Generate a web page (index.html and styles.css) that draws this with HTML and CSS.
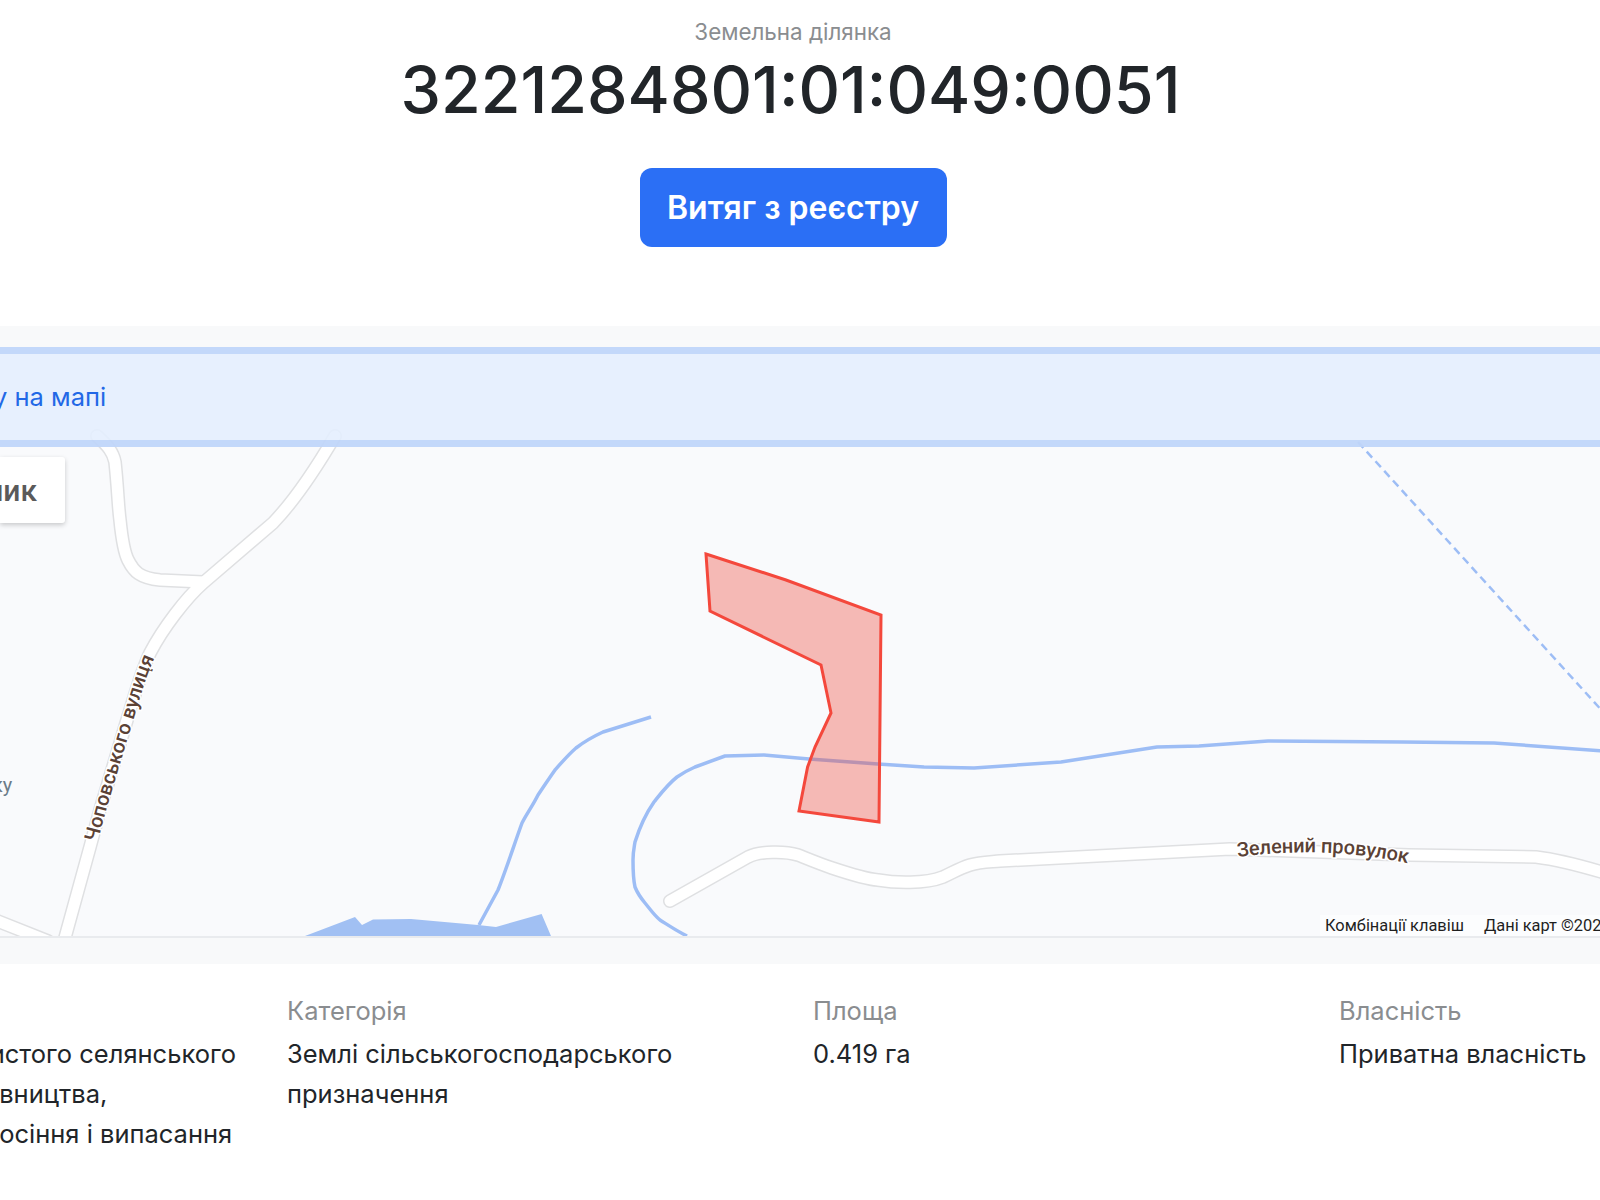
FILE: index.html
```html
<!DOCTYPE html>
<html lang="uk">
<head>
<meta charset="utf-8">
<title>Земельна ділянка</title>
<link rel="stylesheet" href="styles.css">
</head>
<body>
<main class="page">
  <header class="hero">
    <p class="hero-label">Земельна ділянка</p>
    <h1 class="hero-number">3221284801:01:049:0051</h1>
    <a class="btn" href="#">Витяг з реєстру</a>
  </header>

  <section class="map-section">
    <div class="map">
      <svg class="map-svg" viewBox="0 347 1600 589" width="1600" height="589">
        <defs>
          <path id="road-chop" d="M63,945 L90,847 L100,810 L127,720 C135,695 140,675 150,653 C163,628 186,598 203,583"/>
          <path id="road-zel" d="M1237,851 C1290,844 1350,844 1412,858"/>
        </defs>
        <g class="road-casing">
          <path d="M97,436 C108,446 113,452 115,462 C118,490 118,505 120,520 C122,540 124,552 128,560 C134,572 140,578 160,580 L203,582"/>
          <path d="M335,436 C318,465 295,500 273,523 L203,583 C186,598 163,628 150,653 C140,675 135,695 127,720 L100,810 L90,847 L63,945"/>
          <path d="M-5,920 L48,941"/>
          <path d="M670,901 L748,857 C760,851 785,851 798,855 C808,859 820,864 832,868 C850,874 865,879 878,880 C895,883 925,884 943,877 C952,873 960,868 970,865 C980,862 990,862 1000,861 L1230,849 L1409,855 L1536,857 C1560,860 1585,867 1605,873"/>
        </g>
        <g class="road-fill">
          <path d="M97,436 C108,446 113,452 115,462 C118,490 118,505 120,520 C122,540 124,552 128,560 C134,572 140,578 160,580 L203,582"/>
          <path d="M335,436 C318,465 295,500 273,523 L203,583 C186,598 163,628 150,653 C140,675 135,695 127,720 L100,810 L90,847 L63,945"/>
          <path d="M-5,920 L48,941"/>
          <path d="M670,901 L748,857 C760,851 785,851 798,855 C808,859 820,864 832,868 C850,874 865,879 878,880 C895,883 925,884 943,877 C952,873 960,868 970,865 C980,862 990,862 1000,861 L1230,849 L1409,855 L1536,857 C1560,860 1585,867 1605,873"/>
        </g>
        <polygon class="lake" points="305,936 355,917 362,925 373,919.5 411,919 478,925 496,927 541.6,914 551,936"/>
        <g class="river">
          <path d="M651,717 L603,732 C590,738 585,741 576,748 C568,755 562,762 555,770 C548,780 544,786 538,795 C532,807 527,813 522,823 C514,845 506,870 498,890 L479,925"/>
          <path d="M687,936 C675,930 668,925 660,920 C654,915 650,909 645,903 C640,897 637,892 635,887 C633,878 633,870 633,860 C633,852 634,848 635,842 C640,826 647,812 654,802 C662,792 668,784 677,777 C683,773 688,770 695,767 L725,756 L764,755 L809,759 L878,764 L924,767 L974,768 L1061,762 L1157,747 L1199,746 L1268,741 L1402,742 L1494,743 L1605,751"/>
        </g>
        <path class="border-dash" d="M1358,442 L1605,714"/>
        <polygon class="parcel" points="706,554 786,580 881,615 879,822 799,811 807.6,767 815,747 831,713 821,665 710,611"/>
        <text class="road-label" dy="6"><textPath href="#road-chop" startOffset="108">Чоповського вулиця</textPath></text>
        <text class="road-label" dy="6"><textPath href="#road-zel" startOffset="0">Зелений провулок</textPath></text>
        <text class="poi-label" x="-8" y="792">ку</text>
      </svg>
      <div class="type-card"><span class="type-card-text">ник</span></div>
      <div class="attribution"><span>Комбінації клавіш</span><span>Дані карт ©2024</span></div>
      <div class="map-banner"><a class="map-banner-link" href="#">у на мапі</a></div>
    </div>
  </section>

  <section class="facts">
    <div class="fact fact-first">
      <div class="fact-label">Призначення</div>
      <div class="fact-value">Для ведення особистого селянського<br>господарства, садівництва,<br>городництва, сінокосіння і випасання</div>
    </div>
    <div class="fact">
      <div class="fact-label">Категорія</div>
      <div class="fact-value">Землі сільськогосподарського призначення</div>
    </div>
    <div class="fact">
      <div class="fact-label">Площа</div>
      <div class="fact-value">0.419 га</div>
    </div>
    <div class="fact">
      <div class="fact-label">Власність</div>
      <div class="fact-value">Приватна власність</div>
    </div>
  </section>
</main>
</body>
</html>
```
FILE: styles.css
```css
* { box-sizing: border-box; }
html, body { margin: 0; padding: 0; background: #fff; }
body {
  width: 1600px;
  height: 1200px;
  overflow: hidden;
  font-family: Inter, "Noto Sans", sans-serif;
  color: #212529;
}
.page { display: flex; flex-direction: column; }

.hero {
  display: flex;
  flex-direction: column;
  align-items: center;
  width: 1586px;
  padding-top: 18px;
  height: 326px;
}
.hero-label {
  margin: 0;
  font-size: 22.4px;
  line-height: 28px;
  color: #8a8d90;
}
.hero-number {
  margin: 5px 5px 0 0;
  font-size: 64.5px;
  line-height: 78px;
  font-weight: 500;
  color: #212529;
}
.btn {
  margin-top: 39px;
  width: 307px;
  height: 79px;
  display: flex;
  align-items: center;
  justify-content: center;
  border-radius: 12px;
  background: #2b6ff5;
  color: #fff;
  font-size: 32px;
  font-weight: 600;
  text-decoration: none;
}

.map-section {
  height: 638px;
  padding: 21px 0 26px;
  background: #f8f9fa;
}
.map {
  position: relative;
  height: 591px;
  background: #f9fafc;
  border-bottom: 2px solid #e9ebee;
  overflow: hidden;
}
.map-svg { display: block; }
.road-casing path { fill: none; stroke: #dfe0e2; stroke-width: 14; stroke-linecap: round; stroke-linejoin: round; }
.road-fill path { fill: none; stroke: #fff; stroke-width: 11; stroke-linecap: round; stroke-linejoin: round; }
.lake { fill: #a1c0f3; }
.river path { fill: none; stroke: #9dbdf5; stroke-width: 3.5; stroke-linejoin: round; }
.border-dash { fill: none; stroke: #9dbdf5; stroke-width: 2.5; stroke-dasharray: 8 5; }
.parcel { fill: rgba(239, 68, 56, 0.36); stroke: #f4483c; stroke-width: 3; stroke-linejoin: miter; }
.road-label {
  font-family: Roboto, sans-serif;
  font-size: 20px;
  font-weight: 500;
  fill: #5b4236;
  stroke: #fff;
  stroke-width: 3px;
  paint-order: stroke;
}
.poi-label { font-family: Roboto, sans-serif; font-size: 20px; fill: #6c7c88; }

.type-card {
  position: absolute;
  left: 0;
  top: 110px;
  width: 65px;
  height: 66px;
  display: flex;
  align-items: center;
  justify-content: flex-end;
  padding-right: 28px;
  background: #fff;
  border-radius: 0 3px 3px 0;
  box-shadow: 0 2px 5px rgba(0, 0, 0, 0.2);
}
.type-card-text {
  flex: none;
  font-family: Roboto, sans-serif;
  font-size: 30px;
  font-weight: 500;
  color: #5a5a5a;
}
.attribution {
  position: absolute;
  left: 1320px;
  bottom: 0;
  width: 300px;
  height: 21px;
  display: flex;
  align-items: center;
  gap: 20px;
  padding-left: 5px;
  white-space: nowrap;
  font-family: Roboto, sans-serif;
  font-size: 16.4px;
  color: #1f1f1f;
  background: rgba(255, 255, 255, 0.55);
}
.map-banner {
  position: absolute;
  left: 0;
  right: 0;
  top: 0;
  height: 100px;
  padding-bottom: 2px;
  display: flex;
  align-items: center;
  background: rgba(228, 238, 254, 0.88);
  border-top: 7px solid rgba(160, 192, 245, 0.5);
  border-bottom: 7px solid rgba(160, 192, 245, 0.5);
}
.map-banner-link {
  margin-left: -7px;
  font-size: 25.5px;
  color: #2268e6;
  text-decoration: none;
}

.facts {
  display: grid;
  grid-template-columns: repeat(4, 526px);
  margin-left: -239px;
  padding-top: 31px;
}
.fact { padding-right: 30px; }
.fact-first { padding-right: 0; white-space: nowrap; }
.fact-label {
  font-size: 25.5px;
  line-height: 32px;
  color: #8a8d90;
}
.fact-value {
  margin-top: 7px;
  font-size: 25.5px;
  line-height: 40px;
  color: #212529;
}
```
